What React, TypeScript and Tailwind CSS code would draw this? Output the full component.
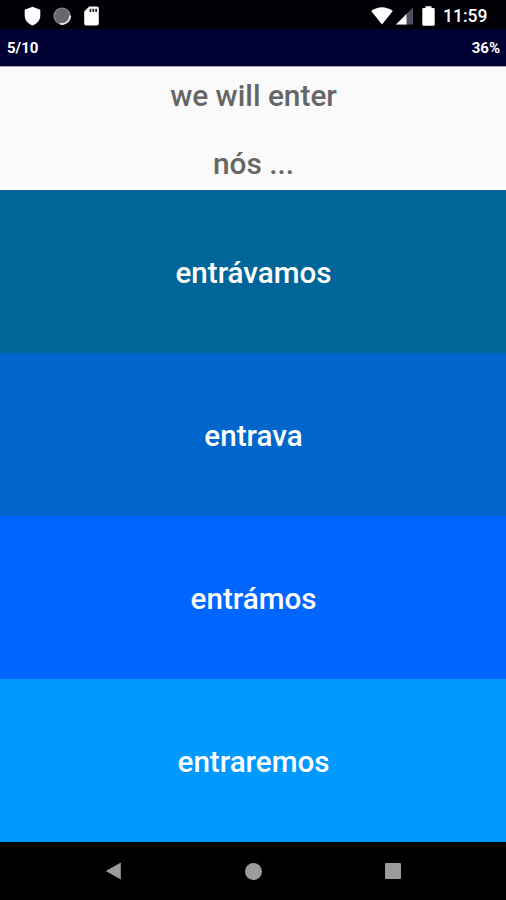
const answers = [
  { text: 'entrávamos', tone: 'h-[163px] bg-[#006699]' },
  { text: 'entrava', tone: 'h-[163px] bg-[#0066cc]' },
  { text: 'entrámos', tone: 'h-[163px] bg-[#0066ff]' },
  { text: 'entraremos', tone: 'h-[163px] bg-[#0099ff]' },
];

function StatusBar() {
  return (
    <div className="flex h-[29px] items-center bg-[#000006] pt-0.5 text-white">
      <svg className="ml-6 h-[20px] w-[17px] shrink-0" viewBox="0 0 17 20" fill="#fff">
        <path d="M8.5 .7 16.3 3.8V9.5C16.3 14 13.3 17.8 8.5 19.5 3.7 17.8.7 14 .7 9.5V3.8Z" />
      </svg>
      <svg className="ml-3 h-[18px] w-[18px] shrink-0" viewBox="0 0 18 18">
        <circle cx="9" cy="9" r="8" fill="#66666c" stroke="#8b8b91" strokeWidth="1.2" />
        <path d="M17 8.5A8 8 0 0 1 7 16.7" fill="none" stroke="#e8e8e8" strokeWidth="1.8" />
      </svg>
      <svg className="ml-[13px] h-5 w-[15px] shrink-0" viewBox="0 0 15 20">
        <path d="M5.3.5H13Q14.8.5 14.8 2.3V17.6Q14.8 19.5 13 19.5H2Q.2 19.5.2 17.6V5.6Z" fill="#fff" />
        <path d="M5.6 2.8H7.3V6H5.6zM8.5 2.8H10.2V6H8.5zM11.3 2.8H13V6H11.3z" fill="#222" />
      </svg>
      <svg className="ml-auto h-[18px] w-[22px] shrink-0" viewBox="0 0 22 18" fill="#fff">
        <path d="M.2 4Q11-3.5 21.8 4L11 17.6Z" />
      </svg>
      <svg className="ml-[3px] h-[18px] w-[17px] shrink-0" viewBox="0 0 17 18">
        <path d="M17 .5V17.5H0Z" fill="#505060" />
        <path d="M10.5 7V17.5H0Z" fill="#fff" />
      </svg>
      <svg className="ml-[9px] h-5 w-[13px] shrink-0" viewBox="0 0 13 20" fill="#fff">
        <path d="M3.5 .3H9.5V2H11.5Q12.7 2 12.7 3.2V18.4Q12.7 19.7 11.5 19.7H1.5Q.3 19.7.3 18.4V3.2Q.3 2 1.5 2H3.5Z" />
      </svg>
      <span className="ml-[8px] mr-[18px] w-[45px] whitespace-nowrap text-[17.5px] font-medium leading-5">11:59</span>
    </div>
  );
}

function NavigationBar() {
  return (
    <div className="flex h-[58px] items-center justify-between bg-black pl-[105px] pr-[105px]">
      <svg className="h-[18px] w-4" viewBox="0 0 16 18" fill="#9c9c9c">
        <path d="M.8 9 15.8.5V17.5Z" />
      </svg>
      <div className="h-[17px] w-[17px] rounded-full bg-[#9c9c9c]" />
      <div className="h-4 w-4 rounded-[1px] bg-[#9c9c9c]" />
    </div>
  );
}

export default function App() {
  return (
    <div className="flex h-[900px] w-[506px] flex-col overflow-hidden bg-black font-[Roboto,sans-serif]">
      <StatusBar />
      <div className="flex h-[37px] items-center justify-between bg-[#000033] pl-[7px] pr-1.5 text-[15px] font-bold leading-5 text-white">
        <span>5/10</span>
        <span>36%</span>
      </div>
      <div className="flex h-[124px] flex-col items-center gap-[34px] border-t border-[#a3a3ad] bg-[#fafafa] pl-px pt-[12px] text-[29.8px] font-medium leading-[34px] text-[#666666]">
        <p>we will enter</p>
        <p>nós ...</p>
      </div>
      {answers.map((answer) => (
        <button
          key={answer.text}
          className={`flex w-full items-center justify-center pl-px pt-[3px] text-[29.6px] font-medium leading-[34px] text-white ${answer.tone}`}
        >
          {answer.text}
        </button>
      ))}
      <NavigationBar />
    </div>
  );
}
